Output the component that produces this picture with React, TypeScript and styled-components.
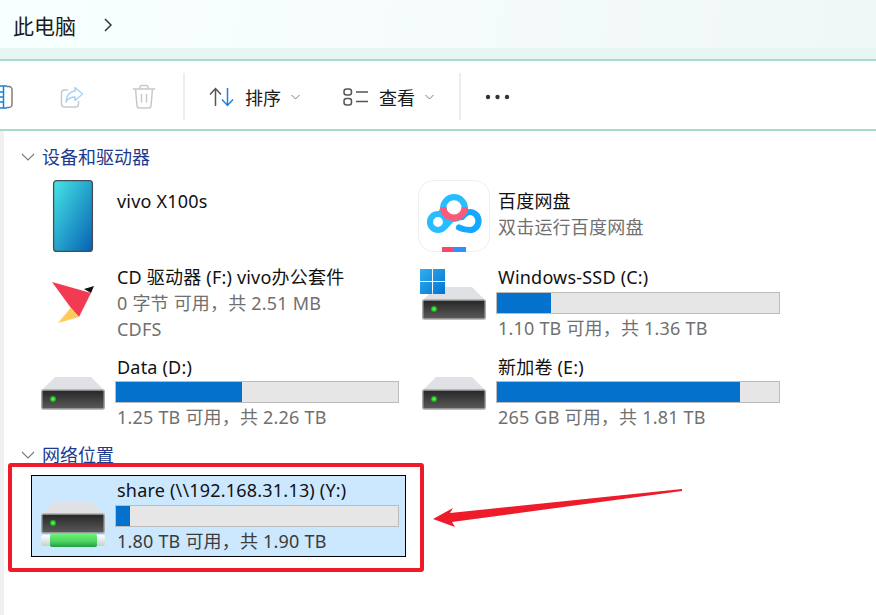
import React from "react"
import styled, { createGlobalStyle } from "styled-components"

const GlobalStyle = createGlobalStyle`
  html, body {
    margin: 0;
    padding: 0;
    background: #fff;
    overflow: hidden;
  }
  * { box-sizing: border-box; }
`

const Page = styled.div`
  position: relative;
  width: 876px;
  height: 615px;
  overflow: hidden;
  background: #fff;
  font-family: "Noto Sans", "Noto Sans CJK SC", sans-serif;
  font-size: 18px;
  color: #1a1a1a;
`

const TitleBar = styled.div`
  display: flex;
  align-items: center;
  gap: 28px;
  height: 48px;
  padding: 1px 0 0 13px;
  background: linear-gradient(100deg, #f8ffff, #f6fcfc 45%, #f0f7f7);
  font-size: 21px;
  svg { display: block; }
`

const TabStrip = styled.div`
  height: 11px;
  background: #e8f6f3;
`

const Toolbar = styled.div`
  display: flex;
  align-items: center;
  height: 72px;
  padding-top: 3px;
  margin-left: -36px;
  border-top: 2px solid #a8d8d0;
  border-bottom: 2px solid #a8d8d0;
`

const ToolIcon = styled.div`
  display: flex;
  align-items: center;
  justify-content: center;
  width: 72px;
  height: 100%;
`

const Separator = styled.div<{ $left?: number; $right: number }>`
  width: 2px;
  height: 47px;
  background: #ededed;
  margin: 0 ${(p) => p.$right}px 0 ${(p) => p.$left ?? 0}px;
`

const ToolButton = styled.div<{ $gap?: number }>`
  display: flex;
  align-items: center;
  gap: 11px;
  margin-right: ${(p) => p.$gap ?? 0}px;
  svg.caret { margin-left: -1px; }
`

const Content = styled.div`
  height: 484px;
  border-left: 4px solid #f0f0f0;
  padding: 13px 0 0 27px;
`

const SectionHead = styled.div<{ $top?: number }>`
  display: flex;
  align-items: center;
  gap: 7px;
  height: 26px;
  margin: ${(p) => p.$top ?? 0}px 0 0 -10px;
  font-size: 18px;
  color: #1d3a8f;
  span { margin-top: -2px; }
`

const Grid = styled.div`
  display: grid;
  grid-template-columns: 375px 375px;
  column-gap: 6px;
  row-gap: 6px;
  margin-top: 6px;
`

const Tile = styled.div<{ $h?: number; $selected?: boolean }>`
  display: flex;
  align-items: center;
  height: ${(p) => p.$h ?? 84}px;
  padding-left: 9px;
  border: 1px solid ${(p) => (p.$selected ? "#000" : "transparent")};
  background: ${(p) => (p.$selected ? "#cce8ff" : "transparent")};
`

const TileIcon = styled.svg`
  display: block;
  flex: none;
  width: 64px;
  height: 72px;
  overflow: visible;
`

const AppIcon = styled(TileIcon)`
  width: 72px;
  margin: 0 -4px;
`

const TileText = styled.div<{ $top?: number }>`
  align-self: flex-start;
  margin-left: 10px;
  padding-top: ${(p) => p.$top ?? 1}px;
  width: 284px;
`

const Line = styled.div<{ $muted?: boolean; $dark?: boolean }>`
  height: 26px;
  line-height: 26px;
  padding-left: 2px;
  white-space: nowrap;
  letter-spacing: 0.2px;
  color: ${(p) => (p.$muted ? "#707070" : p.$dark ? "#3b3b3b" : "#111")};
`

const Bar = styled.div<{ $top?: number }>`
  height: 22px;
  margin: ${(p) => p.$top ?? 1}px 0 1px;
  border: 1px solid #bcbcbc;
  background: #e6e6e6;
`

const BarFill = styled.div`
  height: 100%;
  background: #0472cc;
`

const SelectedWrap = styled.div`
  width: 375px;
  margin-top: 7px;
`

const RedBox = styled.div`
  position: absolute;
  left: 8px;
  top: 463px;
  width: 416px;
  height: 109px;
  border: 4px solid #ee1c2b;
  border-radius: 3px;
`

const ArrowOverlay = styled.svg`
  position: absolute;
  left: 0;
  top: 0;
  width: 876px;
  height: 615px;
  pointer-events: none;
`

const Chevron = () => (
  <svg width="14" height="8" viewBox="0 0 14 8" fill="none">
    <path d="M1 1l6 6 6-6" stroke="#7a7a7a" strokeWidth="1.1" />
  </svg>
)

const Caret = () => (
  <svg className="caret" width="9" height="6" viewBox="0 0 9 6" fill="none">
    <path d="M0.500 1l4 4 4-4" stroke="#7d7d7d" strokeWidth="1" />
  </svg>
)

const DriveBody = ({ y, id }: { y: number; id: string }) => (
  <g>
    <defs>
      <linearGradient id={id} x1="0" y1="0" x2="0" y2="1">
        <stop offset="0" stopColor="#262626" />
        <stop offset="1" stopColor="#5b5b5b" />
      </linearGradient>
      <radialGradient id={id + "-led"}>
        <stop offset="0" stopColor="#7dff6a" />
        <stop offset="0.55" stopColor="#22d61e" />
        <stop offset="1" stopColor="#22d61e" stopOpacity="0.15" />
      </radialGradient>
    </defs>
    <path d={`M1 ${y + 13}L14 ${y}H50L63 ${y + 13}Z`} fill="#dfe1e5" />
    <rect x="0.75" y={y + 13} width="62.5" height="19" rx="1.5" fill={`url(#${id})`} stroke="#a8a8a8" strokeWidth="1.5" />
    <circle cx="12" cy={y + 22} r="3.4" fill={`url(#${id}-led)`} />
  </g>
)

const DriveIcon = ({ id }: { id: string }) => (
  <TileIcon viewBox="0 0 64 72">
    <DriveBody y={19} id={id} />
  </TileIcon>
)

const WindowsDriveIcon = () => (
  <TileIcon viewBox="0 0 64 72">
    <defs>
      <linearGradient id="win" x1="0" y1="0" x2="1" y2="1">
        <stop offset="0" stopColor="#2fb0ee" />
        <stop offset="1" stopColor="#0472d2" />
      </linearGradient>
    </defs>
    <DriveBody y={19} id="drive-c" />
    <path d="M-2 1h12v12H-2zM11 1h12v12H11zM-2 14h12v12H-2zM11 14h12v12H11z" fill="url(#win)" />
  </TileIcon>
)

const NetworkDriveIcon = () => (
  <TileIcon viewBox="0 0 64 72">
    <defs>
      <linearGradient id="net" x1="0" y1="0" x2="0" y2="1">
        <stop offset="0" stopColor="#6cf276" />
        <stop offset="0.6" stopColor="#4bd15f" />
        <stop offset="1" stopColor="#1f9c45" />
      </linearGradient>
      <linearGradient id="tube" x1="0" y1="0" x2="0" y2="1">
        <stop offset="0" stopColor="#ffffff" />
        <stop offset="1" stopColor="#c4d0d0" />
      </linearGradient>
    </defs>
    <rect x="0" y="55" width="64" height="11" rx="2.500" fill="url(#tube)" />
    <rect x="9" y="54" width="47" height="13" rx="2" fill="url(#net)" />
    <DriveBody y={21} id="drive-y" />
  </TileIcon>
)

const PhoneIcon = () => (
  <TileIcon viewBox="0 0 64 72">
    <defs>
      <linearGradient id="phone" x1="0" y1="0" x2="1" y2="1">
        <stop offset="0" stopColor="#46e6e6" />
        <stop offset="1" stopColor="#0661b3" />
      </linearGradient>
    </defs>
    <rect x="12.6" y="0.6" width="38.8" height="70.8" rx="3" fill="url(#phone)" stroke="#484c52" strokeWidth="1.3" />
  </TileIcon>
)

const VivoIcon = () => (
  <TileIcon viewBox="0 0 64 72">
    <path d="M11 14L50 25L38 49L30 40Z" fill="#f23b52" />
    <path d="M29.5 40L38 49L17 55Z" fill="#ffca57" />
    <path d="M43 21L53 18L50 25Z" fill="#111" />
  </TileIcon>
)

const BaiduIcon = () => (
  <AppIcon viewBox="0 0 72 72">
    <rect x="0.5" y="0.5" width="71" height="71" rx="15" fill="#fff" stroke="#efefef" />
    <g fill="none" stroke="#27bdff" strokeWidth="6.2">
      <circle cx="20" cy="42" r="8" />
      <path d="M26 47.500L34 39M22 34.500C24 32 25 30 26 27" />
      <circle cx="36" cy="28" r="10.800" />
      <path d="M41 47.500C44 49 48 50 52 50A8.500 9 0 0 0 52 32C49 32 47 34 44 37" strokeLinecap="round" stroke="#14a9ff" />
    </g>
    <path d="M25.200 27A10.800 10.800 0 0 0 46.800 27" fill="none" stroke="#fb5b78" strokeWidth="6.500" />
    <rect x="24" y="67" width="12" height="5" fill="#f8486f" />
    <rect x="36" y="67" width="12" height="5" fill="#2e8fff" />
  </AppIcon>
)

function App(): React.ReactElement {
  return (
    <Page>
      <GlobalStyle />
      <TitleBar>
        <span>此电脑</span>
        <svg width="8" height="14" viewBox="0 0 8 14" fill="none">
          <path d="M1 1l6 6-6 6" stroke="#333" strokeWidth="1.5" />
        </svg>
      </TitleBar>
      <TabStrip />
      <Toolbar>
        <ToolIcon>
          <svg width="26" height="24" viewBox="0 0 26 24" fill="none">
            <path d="M20 1.500h2a3 3 0 0 1 3 3v15a3 3 0 0 1-3 3h-2" stroke="#777" strokeWidth="1.4" />
            <path d="M16.500 1v22M13 1h7M13 23h7M12 7h4M12 12h4M12 17h4" stroke="#1b7fd4" strokeWidth="1.5" />
          </svg>
        </ToolIcon>
        <ToolIcon>
          <svg width="24" height="22" viewBox="0 0 24 22" fill="none">
            <path d="M8 4H4.500A3 3 0 0 0 1.500 7v11a3 3 0 0 0 3 3h11a3 3 0 0 0 3-3v-3" stroke="#c9c9c9" strokeWidth="1.5" />
            <path d="M15 1.500L22.500 8L15 14.500V11C10.500 11 8 12.500 6 16C6.500 10 9.500 5.500 15 5Z" stroke="#a9d3f5" strokeWidth="1.5" strokeLinejoin="round" />
          </svg>
        </ToolIcon>
        <ToolIcon>
          <svg width="24" height="25" viewBox="0 0 24 25" fill="none" stroke="#c9c9c9" strokeWidth="1.5">
            <path d="M1 5h22M8 5V3.500A2 2 0 0 1 10 1.500h4a2 2 0 0 1 2 2V5" />
            <path d="M3.500 5l1.500 16.500a2.500 2.500 0 0 0 2.500 2.500h9a2.500 2.500 0 0 0 2.500-2.500L20.500 5" />
            <path d="M9.500 10v8.500M14.500 10v8.500" />
          </svg>
        </ToolIcon>
        <Separator $left={3} $right={24} />
        <ToolButton $gap={43}>
          <svg width="25" height="20" viewBox="0 0 25 20" fill="none" strokeWidth="1.5">
            <path d="M6.500 19V2M1 7.500l5.500-6 5.500 6" stroke="#555" />
            <path d="M18.500 1v17M13 12.500l5.500 6 5.500-6" stroke="#1b82dc" />
          </svg>
          <span>排序</span>
          <Caret />
        </ToolButton>
        <ToolButton $gap={25}>
          <svg width="25" height="18" viewBox="0 0 25 18" fill="none" stroke="#555" strokeWidth="1.5">
            <rect x="1" y="1" width="7.500" height="6" rx="2.500" />
            <rect x="1" y="10.500" width="7.500" height="6.500" rx="2.500" />
            <path d="M13 4h12M13 13.500h12" />
          </svg>
          <span>查看</span>
          <Caret />
        </ToolButton>
        <Separator $right={24} />
        <svg width="25" height="6" viewBox="0 0 25 6" fill="#333">
          <circle cx="3" cy="3" r="2.200" />
          <circle cx="12.500" cy="3" r="2.200" />
          <circle cx="22" cy="3" r="2.200" />
        </svg>
      </Toolbar>
      <Content>
        <SectionHead>
          <Chevron />
          <span>设备和驱动器</span>
        </SectionHead>
        <Grid>
          <Tile $h={80}>
            <PhoneIcon />
            <TileText $top={11}>
              <Line>vivo X100s</Line>
            </TileText>
          </Tile>
          <Tile $h={80}>
            <BaiduIcon />
            <TileText $top={11}>
              <Line>百度网盘</Line>
              <Line $muted>双击运行百度网盘</Line>
            </TileText>
          </Tile>
          <Tile>
            <VivoIcon />
            <TileText>
              <Line>CD 驱动器 (F:) vivo办公套件</Line>
              <Line $muted>0 字节 可用，共 2.51 MB</Line>
              <Line $muted>CDFS</Line>
            </TileText>
          </Tile>
          <Tile>
            <WindowsDriveIcon />
            <TileText>
              <Line>Windows-SSD (C:)</Line>
              <Bar $top={2}><BarFill style={{ width: "19%" }} /></Bar>
              <Line $muted>1.10 TB 可用，共 1.36 TB</Line>
            </TileText>
          </Tile>
          <Tile>
            <DriveIcon id="drive-d" />
            <TileText>
              <Line>Data (D:)</Line>
              <Bar><BarFill style={{ width: "44.7%" }} /></Bar>
              <Line $muted>1.25 TB 可用，共 2.26 TB</Line>
            </TileText>
          </Tile>
          <Tile>
            <DriveIcon id="drive-e" />
            <TileText>
              <Line>新加卷 (E:)</Line>
              <Bar><BarFill style={{ width: "86%" }} /></Bar>
              <Line $muted>265 GB 可用，共 1.81 TB</Line>
            </TileText>
          </Tile>
        </Grid>
        <SectionHead $top={6}>
          <Chevron />
          <span>网络位置</span>
        </SectionHead>
        <SelectedWrap>
          <Tile $h={82} $selected>
            <NetworkDriveIcon />
            <TileText>
              <Line>share (\\192.168.31.13) (Y:)</Line>
              <Bar $top={2}><BarFill style={{ width: "5%" }} /></Bar>
              <Line $dark>1.80 TB 可用，共 1.90 TB</Line>
            </TileText>
          </Tile>
        </SelectedWrap>
      </Content>
      <RedBox />
      <ArrowOverlay viewBox="0 0 876 615">
        <path d="M433 519L453 508L450 513L682 489L682 491L452 522L455 527Z" fill="#ee1c2b" />
      </ArrowOverlay>
    </Page>
  )
}

export default App
